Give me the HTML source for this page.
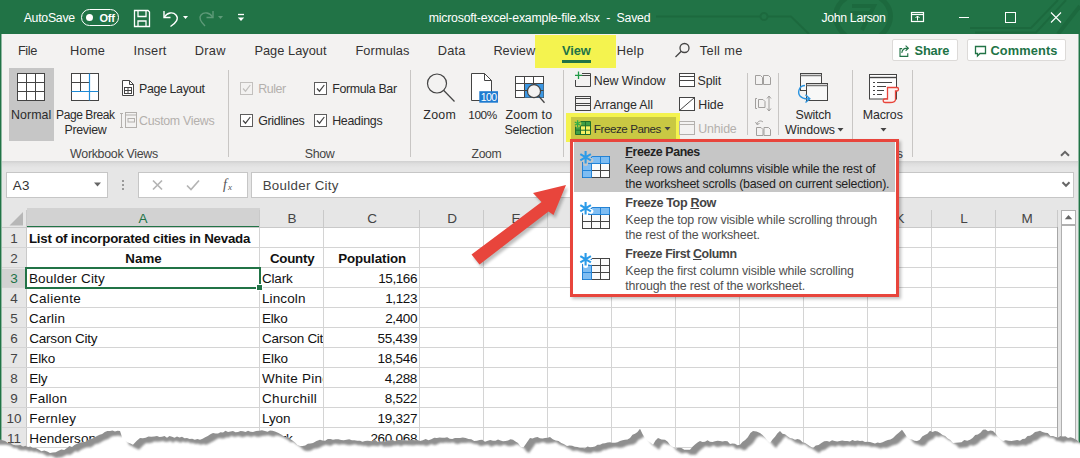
<!DOCTYPE html>
<html>
<head>
<meta charset="utf-8">
<title>Excel Freeze Panes</title>
<style>
html,body{margin:0;padding:0;}
body{width:1080px;height:458px;overflow:hidden;background:#fff;font-family:"Liberation Sans",sans-serif;font-size:13px;color:#262626;position:relative;}
.abs{position:absolute;}
.t{position:absolute;white-space:nowrap;line-height:16px;height:16px;}
.c{text-align:center;}
#titlebar{left:0;top:0;width:1080px;height:34px;background:#217346;}
#titlebar .t{color:#fff;font-size:13.5px;}
#tabs{left:2px;top:34px;width:1076px;height:32px;background:#f3f2f1;}
#tabs .t{font-size:14px;color:#333;top:8px;}
#ribbon{left:2px;top:66px;width:1076px;height:95px;background:#f3f2f1;}
#ribbon .t{font-size:13.5px;color:#2b2b2b;}
#ribbon .g{color:#444;}
#ribbon .dis{color:#b3b0ad;}
.sep{position:absolute;width:1px;background:#c8c6c4;}
#shade{left:2px;top:161px;width:1076px;height:7px;background:linear-gradient(#d0d0d0,#dedede 40%,#e6e6e6);}
#fbar{left:2px;top:168px;width:1076px;height:40px;background:#e6e6e6;}
.box{position:absolute;background:#fff;border:1px solid #c6c6c6;box-sizing:border-box;}
#grid{left:2px;top:208px;width:1076px;height:250px;background:#fff;}
.lb{position:absolute;left:0;top:34px;width:1px;height:424px;background:#217346;border-right:1px solid #8fb8a1;}
.rb{position:absolute;left:1079px;top:34px;width:1px;height:424px;background:#217346;border-left:1px solid #8fb8a1;margin-left:-1px;}
.cb{position:absolute;width:13px;height:13px;border:1px solid #5d5d5d;box-sizing:border-box;background:#fff;}
.cb.d{border-color:#c2c0be;background:#f3f2f1;}
.btn{position:absolute;background:#fff;border:1px solid #dcdad8;border-radius:2px;box-sizing:border-box;}
.tab{top:42.7px;font-size:14px;color:#333;}
.r{font-size:13px;color:#2b2b2b;}
.r.g{color:#444;}
.r.dis{color:#b3b0ad;}
.hd{font-size:13.500px;color:#444;margin-top:0.6px;}
.cell{font-size:13.500px;color:#111;margin-top:0.8px;}
.b{font-weight:bold;}
.mt{font-size:13px;font-weight:bold;color:#444;letter-spacing:-0.200px;}
.md{font-size:13px;color:#505050;}
</style>
</head>
<body>
<div class="abs" id="titlebar"></div>
<div class="abs" id="tabs"></div>
<div class="abs" id="ribbon"></div>
<div class="abs" id="shade"></div>
<div class="abs" id="fbar"></div>
<div class="abs" id="grid"></div>

<!-- TITLE BAR -->
<svg class="abs" style="left:0;top:0" width="1080" height="34" viewBox="0 0 1080 34">
  <g fill="none" stroke="#1c683d" stroke-width="2" opacity="0.85">
    <path d="M656 16.500 H760 M768 16.500 H791 L809 34"/><circle cx="764" cy="16.500" r="3.500"/>
    <path d="M846 -2 C832 8 832 24 846 36 M880 -2 C894 8 894 24 880 36" stroke-width="5"/>
    <path d="M852 6 H874 L862 30 M850 13 H870" stroke-width="4"/>
    <path d="M970 28 H1031 L1058 0" stroke-width="2"/>
    <path d="M975 32.500 H1036 L1066 0" stroke-width="2"/>
    <path d="M1080 6 L1058 34" stroke-width="4"/>
  </g>
</svg>
<div class="t" id="tAuto" style="left:23.7px;top:10px;color:#fff;font-size:12.3px;letter-spacing:-0.27px;">AutoSave</div>
<div class="abs" style="left:81px;top:9px;width:38px;height:17px;border:1px solid #fff;border-radius:9px;box-sizing:border-box;"></div>
<div class="abs" style="left:86px;top:14px;width:7px;height:7px;border-radius:4px;background:#fff;"></div>
<div class="t" id="tOff" style="left:99.4px;top:9.5px;color:#fff;font-size:11.0px;font-weight:bold;letter-spacing:-0.23px;">Off</div>
<svg class="abs" style="left:130px;top:6px" width="130" height="24" viewBox="0 0 130 24" fill="none" stroke="#fff" stroke-width="1.3">
  <!-- save -->
  <path d="M4.5 4.5 H18 L19.5 6 V20.5 H4.5 Z"/>
  <path d="M8 4.5 V10.5 H16 V4.5"/>
  <path d="M8 20.5 V15 H16 V20.5"/>
  <!-- undo -->
  <path d="M34 5 V11.5 H40.5" stroke-width="1.4"/>
  <path d="M34.5 11 C37 6.5 43 5.5 46 9 C49 12.5 46.5 16.5 40.5 20.5" stroke-width="1.4"/>
  <path d="M53 10 h5 l-2.5 3 z" fill="#fff" stroke="none"/>
  <!-- redo (dim) -->
  <g stroke="#5e9a78"><path d="M83 5 V11.5 H76.5" stroke-width="1.4"/>
  <path d="M82.500 11 C80 6.500 74 5.500 71 9 C68.500 12 70 15 75 20" stroke-width="1.4"/></g>
  <path d="M88 10 h5 l-2.500 3 z" fill="#5e9a78" stroke="none"/>
  <!-- customize -->
  <path d="M108 8.500 h6" stroke-width="1.300"/>
  <path d="M107.800 11.500 h6.400 l-3.200 3.500 z" fill="#fff" stroke="none"/>
</svg>
<div class="t" id="tTitle" style="left:428.7px;top:10px;color:#fff;font-size:12.3px;letter-spacing:-0.20px;">microsoft-excel-example-file.xlsx &nbsp;-&nbsp; Saved</div>
<div class="t" id="tUser" style="left:821.4px;top:10px;color:#fff;font-size:12.3px;letter-spacing:-0.32px;">John Larson</div>
<svg class="abs" style="left:905px;top:6px" width="165" height="24" viewBox="0 0 165 24" fill="none" stroke="#fff" stroke-width="1.2">
  <rect x="6.500" y="6.500" width="12" height="9"/>
  <path d="M6.500 8.500 h12" />
  <path d="M12.500 14.500 V10 M10.500 12 L12.500 10 L14.500 12" stroke-width="1"/>
  <path d="M54 11.500 h10" stroke-width="1"/>
  <rect x="100.500" y="6.500" width="10" height="10" stroke-width="1"/>
  <path d="M146 6.500 L156 16.500 M156 6.500 L146 16.500" stroke-width="1.100"/>
</svg>

<!-- TABS -->
<div class="abs" style="left:534.500px;top:35px;width:81.500px;height:32.500px;background:#f4f34f;"></div>
<div class="abs" style="left:562px;top:60px;width:29px;height:3px;background:#217346;"></div>
<div class="t tab" id="tFile" style="left:17.9px;font-size:12.8px;letter-spacing:-0.38px;">File</div>
<div class="t tab" id="tHome" style="left:70.0px;font-size:12.8px;letter-spacing:0.26px;">Home</div>
<div class="t tab" id="tInsert" style="left:133.4px;font-size:12.8px;letter-spacing:0.20px;">Insert</div>
<div class="t tab" id="tDraw" style="left:194.7px;font-size:12.8px;letter-spacing:0.33px;">Draw</div>
<div class="t tab" id="tPL" style="left:254.4px;font-size:12.8px;letter-spacing:0.03px;">Page Layout</div>
<div class="t tab" id="tForm" style="left:355.4px;font-size:12.8px;letter-spacing:0.11px;">Formulas</div>
<div class="t tab" id="tData" style="left:437.7px;font-size:12.8px;letter-spacing:0.22px;">Data</div>
<div class="t tab" id="tRev" style="left:493.4px;font-size:12.8px;letter-spacing:-0.04px;">Review</div>
<div class="t tab" id="tView" style="left:562.1px;color:#217346;font-weight:bold;letter-spacing:-0.11px;font-size:12.8px;">View</div>
<div class="t tab" id="tHelp" style="left:616.7px;font-size:12.8px;letter-spacing:0.27px;">Help</div>
<svg class="abs" style="left:672px;top:40px" width="22" height="22" viewBox="0 0 22 22" fill="none" stroke="#444" stroke-width="1.3"><circle cx="12.500" cy="8" r="4.500"/><path d="M9.300 11.200 L3.500 17"/></svg>
<div class="t tab" id="tTell" style="left:699.8px;font-size:12.8px;letter-spacing:0.32px;">Tell me</div>
<div class="btn" style="left:892px;top:39px;width:66px;height:22px;"></div>
<div class="btn" style="left:967px;top:39px;width:99px;height:22px;"></div>
<svg class="abs" style="left:897px;top:42.500px" width="15.500" height="15.500" viewBox="0 0 18 18" fill="none" stroke="#217346" stroke-width="1.3"><path d="M6 6.500 H3.500 V15.500 H12.500 V12"/><path d="M5.500 11.500 C6 8 8.500 6 12 6 M10 3 L13.200 6 L10 9"/></svg>
<div class="t" id="tShare" style="left:914.6px;top:43px;color:#217346;font-size:12.8px;font-weight:bold;letter-spacing:-0.22px;">Share</div>
<svg class="abs" style="left:972px;top:41.500px" width="18" height="18" viewBox="0 0 18 18" fill="none" stroke="#217346" stroke-width="1.300"><path d="M3.500 4.500 H13.500 V11.500 H8 L5.500 14 V11.500 H3.500 Z"/></svg>
<div class="t" id="tComm" style="left:990.4px;top:43px;color:#217346;font-size:12.8px;font-weight:bold;letter-spacing:0.13px;">Comments</div>

<!-- RIBBON CONTENT -->
<div class="abs" style="left:9px;top:68px;width:45px;height:73px;background:#c6c6c6;"></div>
<!-- Normal icon -->
<svg class="abs" style="left:16px;top:72px" width="30" height="30" viewBox="0 0 30 30" fill="#fff" stroke="#444" stroke-width="1"><rect x="1.500" y="1.500" width="27" height="27"/><path d="M10.500 1.500 V28.500 M19.500 1.500 V28.500 M1.500 10.500 H28.500 M1.500 19.500 H28.500" fill="none"/></svg>
<div class="t r" id="rNormal" style="left:11.0px;top:107px;font-size:12.4px;letter-spacing:0.06px;">Normal</div>
<!-- Page break icon -->
<svg class="abs" style="left:70px;top:72px" width="30" height="30" viewBox="0 0 30 30" fill="#fff" stroke="#444" stroke-width="1"><rect x="1.500" y="1.500" width="27" height="27"/><path d="M10.500 1.500 V19.500 M1.500 10.500 H19.500" fill="none"/><path d="M19.500 1.500 V28.500 M1.500 19.500 H28.500" fill="none" stroke="#1e8ad6" stroke-width="1.200"/></svg>
<div class="t r" id="rPB" style="left:56.1px;top:107px;font-size:12.0px;letter-spacing:-0.42px;">Page Break</div>
<div class="t r" id="rPrev" style="left:64.5px;top:122px;font-size:12.4px;letter-spacing:-0.31px;">Preview</div>
<!-- Page Layout small icon -->
<svg class="abs" style="left:120px;top:80px" width="18" height="18" viewBox="0 0 18 18" fill="none" stroke="#444" stroke-width="1"><path d="M2.500 0.500 H9.500 L13.500 4.500 V15.500 H2.500 Z" fill="#fff"/><path d="M9.500 0.500 V4.500 H13.500"/><rect x="4.500" y="7.500" width="7" height="6"/><path d="M8 7.500 V13.500 M4.500 10.500 H11.500"/></svg>
<div class="t r" id="rPL" style="left:139.0px;top:81px;font-size:12.4px;letter-spacing:-0.36px;">Page Layout</div>
<svg class="abs" style="left:118px;top:110px" width="20" height="20" viewBox="0 0 20 20" fill="none" stroke="#b3b0ad" stroke-width="1"><path d="M3.500 3.500 V17.500 M2 3.500 H5 M2 17.500 H5"/><rect x="7.500" y="2.500" width="11" height="15"/><path d="M7.500 5 H18.500"/><rect x="10" y="8.500" width="6.500" height="3.500"/></svg>
<div class="t r dis" id="rCV" style="left:139.0px;top:113px;font-size:12.4px;letter-spacing:-0.30px;">Custom Views</div>
<div class="t r g" id="gWV" style="left:70.1px;top:146px;font-size:12.4px;letter-spacing:-0.29px;">Workbook Views</div>
<div class="sep" style="left:228px;top:70px;height:87px;"></div>
<!-- Show -->
<div class="cb d" style="left:240px;top:81.500px;"></div>
<div class="cb" style="left:240px;top:113.500px;"></div>
<div class="cb" style="left:314px;top:81.500px;"></div>
<div class="cb" style="left:314px;top:113.500px;"></div>
<svg class="abs" style="left:240px;top:82px" width="90" height="46" viewBox="0 0 90 46" fill="none" stroke="#444" stroke-width="1.200"><path d="M3 6.500 L5.500 9.200 L10.300 3" stroke="#c2c0be"/><path d="M3 38.500 L5.500 41.200 L10.300 35"/><path d="M77 6.500 L79.500 9.200 L84.300 3"/><path d="M77 38.500 L79.500 41.200 L84.300 35"/></svg>
<div class="t r dis" id="rRuler" style="left:258.2px;top:81px;font-size:12.4px;letter-spacing:-0.44px;">Ruler</div>
<div class="t r" id="rGrid" style="left:258.2px;top:113px;font-size:12.4px;letter-spacing:-0.29px;">Gridlines</div>
<div class="t r" id="rFB" style="left:332.2px;top:81px;font-size:12.4px;letter-spacing:-0.33px;">Formula Bar</div>
<div class="t r" id="rHead" style="left:332.2px;top:113px;font-size:12.4px;letter-spacing:-0.28px;">Headings</div>
<div class="t r g" id="gShow" style="left:304.8px;top:146px;font-size:12.4px;letter-spacing:-0.33px;">Show</div>
<div class="sep" style="left:410px;top:70px;height:87px;"></div>
<!-- Zoom -->
<svg class="abs" style="left:424px;top:70px" width="34" height="34" viewBox="0 0 34 34" fill="none" stroke="#444" stroke-width="1.200"><circle cx="13" cy="13.500" r="9.500"/><path d="M19.800 20.500 L30.500 31.500"/></svg>
<div class="t r" id="rZoom" style="left:423.3px;top:107px;font-size:12.4px;letter-spacing:0.28px;">Zoom</div>
<svg class="abs" style="left:468px;top:70px" width="34" height="34" viewBox="0 0 34 34" fill="none" stroke="#444" stroke-width="1"><path d="M3.500 3.500 H16.500 L23.500 10.500 V30.500 H3.500 Z" fill="#fff"/><path d="M16.500 3.500 V10.500 H23.500"/><rect x="11.300" y="21.200" width="18.700" height="11.500" fill="#1e7bd0" stroke="none"/><text x="20.600" y="31" font-family="Liberation Sans, sans-serif" font-size="10.500" fill="#fff" stroke="none" text-anchor="middle" letter-spacing="-0.600">100</text></svg>
<div class="t r" id="r100" style="left:468.3px;top:107px;font-size:11.8px;letter-spacing:-0.42px;">100%</div>
<svg class="abs" style="left:512px;top:70px" width="36" height="36" viewBox="0 0 36 36" fill="none" stroke="#444" stroke-width="1"><rect x="3.500" y="6.500" width="28" height="21" fill="#fff"/><rect x="12.500" y="13.500" width="19" height="14" fill="#3b97e3" stroke="none"/><path d="M3.500 13.500 H31.500 M3.500 20.500 H31.500 M12.500 6.500 V27.500 M21.500 6.500 V27.500"/><circle cx="22" cy="21.200" r="6.500" fill="#f3f2f1" stroke-width="1.200"/><path d="M26.600 26 L32.500 32.700" stroke-width="1.300"/></svg>
<div class="t r" id="rZT" style="left:505.4px;top:107px;font-size:12.4px;letter-spacing:0.22px;">Zoom to</div>
<div class="t r" id="rSel" style="left:504.5px;top:122px;font-size:12.4px;letter-spacing:-0.24px;">Selection</div>
<div class="t r g" id="gZoom" style="left:471.6px;top:146px;font-size:12.2px;letter-spacing:-0.36px;">Zoom</div>
<div class="sep" style="left:563px;top:70px;height:87px;"></div>
<!-- Window -->
<div class="abs" style="left:566px;top:113px;width:114px;height:29px;background:#f4f34f;"></div>
<div class="abs" style="left:571px;top:117px;width:105px;height:23px;background:#c9c843;"></div>
<svg class="abs" style="left:573px;top:70px" width="20" height="70" viewBox="0 0 20 70" fill="none" stroke="#444" stroke-width="1">
 <path d="M9 3.500 H17.500 V16.500 H2.500 V10"/><path d="M9 5.500 H17.500"/><path d="M5.500 1.500 V9 M2 5.300 H9.200" stroke="#1e9a45" stroke-width="1.300"/>
 <rect x="2.500" y="26.500" width="15" height="14" fill="#f3f2f1"/><path d="M2.500 28.500 H17.500 M2.500 33.500 H17.500 M2.500 35.500 H17.500"/>
 <rect x="2.500" y="51.500" width="15" height="13" fill="#f6f163" stroke="none"/>
 <rect x="7.500" y="51.500" width="10" height="4.300" fill="#3f9f45" stroke="none"/><rect x="2.500" y="55.800" width="5" height="8.700" fill="#3f9f45" stroke="none"/>
 <path d="M2.500 51.500 H17.500 V64.500 H2.500 Z M2.500 55.800 H17.500 M2.500 60.200 H17.500 M7.500 51.500 V64.500 M12.500 51.500 V64.500" stroke="#1f6e2b"/>
 <path d="M4.600 50 V57.200 M1.500 51.800 L7.700 55.400 M7.700 51.800 L1.500 55.400" stroke="#c9c843" stroke-width="3.400"/>
 <path d="M4.600 50.300 V56.900 M1.800 52 L7.400 55.200 M7.400 52 L1.800 55.200" stroke="#2fae45" stroke-width="1.300"/>
</svg>
<div class="t r" id="rNW" style="left:593.8px;top:73px;font-size:12.4px;letter-spacing:-0.06px;">New Window</div>
<div class="t r" id="rAA" style="left:593.4px;top:97px;font-size:12.4px;letter-spacing:-0.11px;">Arrange All</div>
<div class="t r" id="rFP" style="left:593.8px;top:121px;font-size:11.6px;letter-spacing:-0.42px;">Freeze Panes</div>
<svg class="abs" style="left:663.500px;top:126px" width="8" height="6" viewBox="0 0 8 6"><path d="M0.500 1 h6 l-3 3.500 z" fill="#444"/></svg>
<svg class="abs" style="left:677px;top:70px" width="20" height="70" viewBox="0 0 20 70" fill="none" stroke="#444" stroke-width="1">
 <rect x="2.500" y="3.500" width="15" height="13" fill="#fff"/><path d="M2.500 6.500 H17.500 M2.500 10.500 H17.500"/>
 <rect x="2.500" y="27.500" width="15" height="13" fill="#fff"/><path d="M2.500 40.500 L17.500 27.500"/>
 <g stroke="#b3b0ad"><rect x="2.500" y="51.500" width="15" height="13" fill="#f3f2f1"/><path d="M2.500 54.500 H17.500"/></g>
</svg>
<div class="t r" id="rSplit" style="left:697.6px;top:73px;font-size:12.4px;letter-spacing:-0.14px;">Split</div>
<div class="t r" id="rHide" style="left:698.3px;top:97px;font-size:12.4px;letter-spacing:-0.07px;">Hide</div>
<div class="t r dis" id="rUnhide" style="left:698.3px;top:121px;font-size:12.4px;letter-spacing:-0.16px;">Unhide</div>
<div class="sep" style="left:747px;top:73px;height:62px;"></div>
<svg class="abs" style="left:753px;top:70px" width="20" height="70" viewBox="0 0 20 70" fill="none" stroke="#a19f9d" stroke-width="1">
 <path d="M2.500 5.500 H7.500 L9.500 7.500 V14.500 H2.500 Z M10.500 5.500 H15.500 L17.500 7.500 V14.500 H10.500 Z"/>
 <path d="M4 28.500 H2.500 V38.500 H4 M5.500 29.500 H10 L12 31.500 V37.500 H5.500 Z M16 26 V41 M14 28.500 L16 26 L18 28.500 M14 38.500 L16 41 L18 38.500"/>
 <path d="M3.500 57.500 H8 L10 59.500 V65.500 H3.500 Z M11 57.500 H15.500 L17.500 59.500 V65.500 H11 Z M4 54.500 C4 51 8 50 10 52 M4 54.500 L2.500 52 M4 54.500 L6.500 53.500"/>
</svg>
<div class="sep" style="left:778px;top:73px;height:62px;"></div>
<svg class="abs" style="left:794px;top:70px" width="40" height="36" viewBox="0 0 40 36" fill="none" stroke="#444" stroke-width="1">
 <rect x="6.500" y="3.500" width="21" height="17" fill="#f8f8f8"/><path d="M6.500 5.500 H27.500" stroke-width="1.500" stroke="#777"/>
 <rect x="12.500" y="13.500" width="21" height="17" fill="#f8f8f8"/><path d="M12.500 15.500 H33.500" stroke-width="1.500" stroke="#777"/>
 <path d="M11 15.500 C5.500 15.500 3 22 6 26 C8 28.500 11 29 15 28.800 M11.500 24.800 L15.800 28.800 L11.500 32.600" stroke="#2b94e0" stroke-width="1.400"/>
</svg>
<div class="t r" id="rSw" style="left:795.6px;top:107px;font-size:12.4px;letter-spacing:-0.18px;">Switch</div>
<div class="t r" id="rWin" style="left:785.0px;top:122px;font-size:12.4px;letter-spacing:-0.04px;">Windows</div>
<svg class="abs" style="left:836.500px;top:127px" width="8" height="6" viewBox="0 0 8 6"><path d="M0.500 1 h6 l-3 3.500 z" fill="#444"/></svg>
<div class="sep" style="left:852px;top:70px;height:87px;"></div>
<svg class="abs" style="left:865px;top:70px" width="38" height="36" viewBox="0 0 38 36" fill="none" stroke="#444" stroke-width="1">
 <rect x="4.500" y="4.500" width="27" height="24.500" fill="#fff"/><path d="M4.500 7.500 H31.500" stroke-width="1.400"/><path d="M8 12.500 H10 M12 12.500 H27 M8 16.500 H10 M12 16.500 H21 M8 20.500 H10 M12 20.500 H19 M8 24.500 H10 M12 24.500 H17"/>
 <path d="M22.500 17.500 H32 C34 17.500 34 21 32 21 H30.500 V29.500 C30.500 32.500 27 32.500 25 32.500 H20 C17.500 32.500 17.500 29 20 29 H22.500 Z" fill="#fdf3f2" stroke="#e8443a" stroke-width="1.300"/>
</svg>
<div class="t r" id="rMac" style="left:862.7px;top:107px;font-size:12.4px;letter-spacing:-0.09px;">Macros</div>
<svg class="abs" style="left:879.500px;top:127px" width="8" height="6" viewBox="0 0 8 6"><path d="M0.500 1 h6 l-3 3.500 z" fill="#444"/></svg>
<div class="sep" style="left:912px;top:70px;height:87px;"></div>
<div class="t r g" id="gWin" style="left:896.500px;top:146px;">s</div>
<svg class="abs" style="left:1058.500px;top:147.500px" width="12" height="10" viewBox="0 0 12 10" fill="none" stroke="#666" stroke-width="2"><path d="M2 7.800 L6 3.800 L10 7.800"/></svg>

<!-- FORMULA BAR -->
<div class="box" style="left:6px;top:172px;width:102px;height:26px;"></div>
<div class="t" id="fA3" style="left:12.7px;top:178px;font-size:13.4px;color:#333;letter-spacing:0.40px;">A3</div>
<svg class="abs" style="left:93px;top:181px" width="10" height="8" viewBox="0 0 10 8"><path d="M1 1.500 h7 l-3.500 4 z" fill="#666"/></svg>
<div class="abs" style="left:122px;top:180px;width:2px;height:2px;background:#9a9a9a;box-shadow:0 4px 0 #9a9a9a,0 8px 0 #9a9a9a;"></div>
<div class="box" style="left:138px;top:172px;width:110px;height:26px;"></div>
<svg class="abs" style="left:139px;top:172px" width="108" height="25" viewBox="0 0 108 25" fill="none" stroke="#b4b4b4" stroke-width="1.700"><path d="M14 8.500 L23 17.500 M23 8.500 L14 17.500"/><path d="M48 13.500 L52 17.500 L60 8.500"/><text x="84" y="17" font-family="Liberation Serif, serif" font-style="italic" font-size="14" fill="#555" stroke="none">f</text><text x="89" y="17.500" font-family="Liberation Serif, serif" font-style="italic" font-size="9" fill="#555" stroke="none">x</text></svg>
<div class="box" style="left:251px;top:172px;width:823px;height:26px;"></div>
<div class="t" id="fBC" style="left:262.7px;top:178px;font-size:13.3px;color:#444;letter-spacing:0.31px;">Boulder City</div>
<svg class="abs" style="left:1059.500px;top:180px" width="12" height="10" viewBox="0 0 12 10" fill="none" stroke="#666" stroke-width="2"><path d="M2.500 2.200 L6 5.800 L9.500 2.200"/></svg>
<!-- GRID -->
<div class="abs" style="left:2px;top:208px;width:1076px;height:20px;background:#e6e6e6;"></div>
<div class="abs" style="left:2px;top:228px;width:24px;height:230px;background:#e6e6e6;"></div>
<div class="abs" style="left:27px;top:208px;width:233px;height:19px;background:#d2d2d2;border-bottom:2px solid #217346;box-sizing:border-box;height:20px;"></div>
<div class="abs" style="left:2px;top:269px;width:24px;height:19px;background:#d2d2d2;border-right:2px solid #217346;box-sizing:border-box;width:25px;"></div>
<svg class="abs" style="left:8px;top:211px" width="16" height="16" viewBox="0 0 16 16"><path d="M15 1 V14.500 H1.500 Z" fill="#b7b7b7"/></svg>
<div class="abs" style="left:259px;top:210px;width:1px;height:18px;background:#c9c9c9;"></div>
<div class="t c hd" style="left:26px;width:234px;top:210px;color:#217346;">A</div>
<div class="abs" style="left:323px;top:210px;width:1px;height:18px;background:#c9c9c9;"></div>
<div class="t c hd" style="left:260px;width:64px;top:210px;color:#444;">B</div>
<div class="abs" style="left:419px;top:210px;width:1px;height:18px;background:#c9c9c9;"></div>
<div class="t c hd" style="left:324px;width:96px;top:210px;color:#444;">C</div>
<div class="abs" style="left:483px;top:210px;width:1px;height:18px;background:#c9c9c9;"></div>
<div class="t c hd" style="left:420px;width:64px;top:210px;color:#444;">D</div>
<div class="abs" style="left:547px;top:210px;width:1px;height:18px;background:#c9c9c9;"></div>
<div class="t c hd" style="left:484px;width:64px;top:210px;color:#444;">E</div>
<div class="abs" style="left:611px;top:210px;width:1px;height:18px;background:#c9c9c9;"></div>
<div class="t c hd" style="left:548px;width:64px;top:210px;color:#444;">F</div>
<div class="abs" style="left:675px;top:210px;width:1px;height:18px;background:#c9c9c9;"></div>
<div class="t c hd" style="left:612px;width:64px;top:210px;color:#444;">G</div>
<div class="abs" style="left:739px;top:210px;width:1px;height:18px;background:#c9c9c9;"></div>
<div class="t c hd" style="left:676px;width:64px;top:210px;color:#444;">H</div>
<div class="abs" style="left:803px;top:210px;width:1px;height:18px;background:#c9c9c9;"></div>
<div class="t c hd" style="left:740px;width:64px;top:210px;color:#444;">I</div>
<div class="abs" style="left:867px;top:210px;width:1px;height:18px;background:#c9c9c9;"></div>
<div class="t c hd" style="left:804px;width:64px;top:210px;color:#444;">J</div>
<div class="abs" style="left:931px;top:210px;width:1px;height:18px;background:#c9c9c9;"></div>
<div class="t c hd" style="left:868px;width:64px;top:210px;color:#444;">K</div>
<div class="abs" style="left:995px;top:210px;width:1px;height:18px;background:#c9c9c9;"></div>
<div class="t c hd" style="left:932px;width:64px;top:210px;color:#444;">L</div>
<div class="abs" style="left:1057px;top:210px;width:1px;height:18px;background:#c9c9c9;"></div>
<div class="t c hd" style="left:996px;width:62px;top:210px;color:#444;">M</div>
<div class="abs" style="left:26px;top:210px;width:1px;height:18px;background:#c9c9c9;"></div>
<div class="abs" style="left:259px;top:228px;width:1px;height:230px;background:#d4d4d4;"></div>
<div class="abs" style="left:323px;top:228px;width:1px;height:230px;background:#d4d4d4;"></div>
<div class="abs" style="left:419px;top:228px;width:1px;height:230px;background:#d4d4d4;"></div>
<div class="abs" style="left:483px;top:228px;width:1px;height:230px;background:#d4d4d4;"></div>
<div class="abs" style="left:547px;top:228px;width:1px;height:230px;background:#d4d4d4;"></div>
<div class="abs" style="left:611px;top:228px;width:1px;height:230px;background:#d4d4d4;"></div>
<div class="abs" style="left:675px;top:228px;width:1px;height:230px;background:#d4d4d4;"></div>
<div class="abs" style="left:739px;top:228px;width:1px;height:230px;background:#d4d4d4;"></div>
<div class="abs" style="left:803px;top:228px;width:1px;height:230px;background:#d4d4d4;"></div>
<div class="abs" style="left:867px;top:228px;width:1px;height:230px;background:#d4d4d4;"></div>
<div class="abs" style="left:931px;top:228px;width:1px;height:230px;background:#d4d4d4;"></div>
<div class="abs" style="left:995px;top:228px;width:1px;height:230px;background:#d4d4d4;"></div>
<div class="abs" style="left:1057px;top:228px;width:1px;height:230px;background:#d4d4d4;"></div>
<div class="abs" style="left:26px;top:228px;width:1px;height:230px;background:#c9c9c9;"></div>
<div class="abs" style="left:2px;top:247px;width:1056px;height:1px;background:#d4d4d4;"></div>
<div class="abs" style="left:2px;top:267px;width:1056px;height:1px;background:#d4d4d4;"></div>
<div class="abs" style="left:2px;top:287px;width:1056px;height:1px;background:#d4d4d4;"></div>
<div class="abs" style="left:2px;top:307px;width:1056px;height:1px;background:#d4d4d4;"></div>
<div class="abs" style="left:2px;top:327px;width:1056px;height:1px;background:#d4d4d4;"></div>
<div class="abs" style="left:2px;top:347px;width:1056px;height:1px;background:#d4d4d4;"></div>
<div class="abs" style="left:2px;top:367px;width:1056px;height:1px;background:#d4d4d4;"></div>
<div class="abs" style="left:2px;top:387px;width:1056px;height:1px;background:#d4d4d4;"></div>
<div class="abs" style="left:2px;top:407px;width:1056px;height:1px;background:#d4d4d4;"></div>
<div class="abs" style="left:2px;top:427px;width:1056px;height:1px;background:#d4d4d4;"></div>
<div class="abs" style="left:2px;top:447px;width:1056px;height:1px;background:#d4d4d4;"></div>
<div class="abs" style="left:2px;top:467px;width:1056px;height:1px;background:#d4d4d4;"></div>
<div class="abs" style="left:2px;top:227px;width:1056px;height:1px;background:#c9c9c9;"></div>
<div class="t c hd" style="left:2px;width:24px;top:230px;color:#444;">1</div>
<div class="t c hd" style="left:2px;width:24px;top:250px;color:#444;">2</div>
<div class="t c hd" style="left:2px;width:24px;top:270px;color:#217346;">3</div>
<div class="t c hd" style="left:2px;width:24px;top:290px;color:#444;">4</div>
<div class="t c hd" style="left:2px;width:24px;top:310px;color:#444;">5</div>
<div class="t c hd" style="left:2px;width:24px;top:330px;color:#444;">6</div>
<div class="t c hd" style="left:2px;width:24px;top:350px;color:#444;">7</div>
<div class="t c hd" style="left:2px;width:24px;top:370px;color:#444;">8</div>
<div class="t c hd" style="left:2px;width:24px;top:390px;color:#444;">9</div>
<div class="t c hd" style="left:2px;width:24px;top:410px;color:#444;">10</div>
<div class="t c hd" style="left:2px;width:24px;top:430px;color:#444;">11</div>
<div class="abs" style="left:27px;top:228px;width:232px;height:19px;background:#fff;"></div>
<div class="t cell b" id="c1" style="left:28.9px;top:230px;font-size:13.3px;letter-spacing:-0.21px;">List of incorporated cities in Nevada</div>
<div class="t cell b" id="c2a" style="left:125.2px;top:250px;font-size:13.3px;letter-spacing:0.12px;">Name</div>
<div class="t cell b" id="c2b" style="left:269.9px;top:250px;font-size:13.3px;letter-spacing:-0.22px;">County</div>
<div class="t cell b" id="c2c" style="left:338.2px;top:250px;font-size:13.3px;letter-spacing:-0.08px;">Population</div>
<div class="t cell" id="ca0" style="left:28.9px;top:270px;font-size:13.5px;letter-spacing:0.22px;">Boulder City</div>
<div class="t cell" id="cb0" style="left:261.9px;top:270px;overflow:hidden;font-size:13.5px;letter-spacing:-0.16px;width:61px;">Clark</div>
<div class="t cell" id="cc0" style="left:378.2px;top:270px;font-size:13.5px;letter-spacing:-0.40px;">15,166</div>
<div class="t cell" id="ca1" style="left:28.9px;top:290px;font-size:13.5px;letter-spacing:0.33px;">Caliente</div>
<div class="t cell" id="cb1" style="left:261.9px;top:290px;overflow:hidden;font-size:13.5px;letter-spacing:0.13px;width:61px;">Lincoln</div>
<div class="t cell" id="cc1" style="left:385.2px;top:290px;font-size:13.5px;letter-spacing:-0.38px;">1,123</div>
<div class="t cell" id="ca2" style="left:28.9px;top:310px;font-size:13.5px;letter-spacing:0.16px;">Carlin</div>
<div class="t cell" id="cb2" style="left:261.9px;top:310px;overflow:hidden;font-size:13.5px;letter-spacing:-0.14px;width:61px;">Elko</div>
<div class="t cell" id="cc2" style="left:385.2px;top:310px;font-size:13.5px;letter-spacing:-0.38px;">2,400</div>
<div class="t cell" id="ca3" style="left:29.3px;top:330px;font-size:13.5px;letter-spacing:-0.23px;">Carson City</div>
<div class="t cell" id="cb3" style="left:262.1px;top:330px;overflow:hidden;font-size:13.5px;letter-spacing:-0.28px;width:61px;">Carson City</div>
<div class="t cell" id="cc3" style="left:377.6px;top:330px;font-size:13.5px;letter-spacing:-0.30px;">55,439</div>
<div class="t cell" id="ca4" style="left:29.3px;top:350px;font-size:13.5px;letter-spacing:-0.12px;">Elko</div>
<div class="t cell" id="cb4" style="left:262.1px;top:350px;overflow:hidden;font-size:13.5px;letter-spacing:-0.09px;width:61px;">Elko</div>
<div class="t cell" id="cc4" style="left:377.6px;top:350px;font-size:13.5px;letter-spacing:-0.30px;">18,546</div>
<div class="t cell" id="ca5" style="left:29.3px;top:370px;font-size:13.5px;letter-spacing:-0.29px;">Ely</div>
<div class="t cell" id="cb5" style="left:262.1px;top:370px;overflow:hidden;font-size:13.5px;letter-spacing:0.27px;width:61px;">White Pine</div>
<div class="t cell" id="cc5" style="left:384.8px;top:370px;font-size:13.5px;letter-spacing:-0.30px;">4,288</div>
<div class="t cell" id="ca6" style="left:29.3px;top:390px;font-size:13.5px;letter-spacing:0.17px;">Fallon</div>
<div class="t cell" id="cb6" style="left:262.1px;top:390px;overflow:hidden;font-size:13.5px;letter-spacing:0.27px;width:61px;">Churchill</div>
<div class="t cell" id="cc6" style="left:384.8px;top:390px;font-size:13.5px;letter-spacing:-0.30px;">8,522</div>
<div class="t cell" id="ca7" style="left:29.3px;top:410px;font-size:13.5px;letter-spacing:0.27px;">Fernley</div>
<div class="t cell" id="cb7" style="left:262.1px;top:410px;overflow:hidden;font-size:13.5px;letter-spacing:-0.12px;width:61px;">Lyon</div>
<div class="t cell" id="cc7" style="left:377.6px;top:410px;font-size:13.5px;letter-spacing:-0.30px;">19,327</div>
<div class="t cell" id="ca8" style="left:29.3px;top:430px;font-size:13.5px;letter-spacing:0.08px;">Henderson</div>
<div class="t cell" id="cb8" style="left:261.9px;top:430px;overflow:hidden;font-size:13.5px;letter-spacing:-0.16px;width:61px;">Clark</div>
<div class="t cell" id="cc8" style="left:370.4px;top:430px;font-size:13.5px;letter-spacing:-0.30px;">260,068</div>
<div class="abs" style="left:25px;top:267px;width:236px;height:22px;border:2px solid #217346;box-sizing:border-box;"></div>
<div class="abs" style="left:256px;top:284px;width:7px;height:7px;background:#217346;border:1px solid #fff;box-sizing:border-box;"></div>
<div class="abs" style="left:1058px;top:208px;width:20px;height:250px;background:#e6e6e6;"></div>
<div class="abs" style="left:1057px;top:227px;width:1px;height:231px;background:#a6a6a6;"></div>
<div class="box" style="left:1061px;top:210px;width:15px;height:15px;border-color:#b0b0b0;"></div>
<svg class="abs" style="left:1063px;top:214px" width="11" height="8" viewBox="0 0 11 8"><path d="M1.800 5.300 L5.500 1 L9.200 5.300 Z" fill="#666"/></svg>
<div class="box" style="left:1061px;top:225px;width:15px;height:233px;border-color:#b0b0b0;"></div>
<!-- DROPDOWN -->
<div class="abs" style="left:570px;top:139px;width:329px;height:158px;background:#fff;border:3px solid #e8453c;box-sizing:border-box;box-shadow:2px 2px 3px rgba(0,0,0,0.250);"></div>
<div class="abs" style="left:574px;top:142px;width:321px;height:50px;background:#c6c6c6;"></div>
<svg class="abs" style="left:579px;top:150px" width="34" height="30" viewBox="0 0 34 30"><rect x="3.5" y="6.5" width="27" height="21" fill="#fbfbfb"/><rect x="3.5" y="6.5" width="27" height="7" fill="#7fbdf2"/><rect x="3.5" y="6.5" width="9" height="21" fill="#7fbdf2"/><g fill="none" stroke="#444" stroke-width="1"><rect x="3.5" y="6.5" width="27" height="21"/><path d="M12.5 6.5 V27.5 M21.5 6.5 V27.5 M3.5 13.5 H30.5 M3.5 20.5 H30.5"/></g><path d="M3.5 6.5 H30.5 V13.5 H12.5 V27.5 H3.5 Z M12.5 6.5 V13.5 M21.5 6.5 V13.5 M3.5 13.5 H12.5 M3.5 20.5 H12.5" fill="none" stroke="#2383d6" stroke-width="1"/><path d="M6.600 1 V13.400 M1.300 4.100 L11.900 10.300 M11.900 4.100 L1.300 10.300" stroke="#c6c6c6" stroke-width="5" fill="none" stroke-linecap="round"/><path d="M6.600 1 V13.400 M1.300 4.100 L11.900 10.300 M11.900 4.100 L1.300 10.300" stroke="#2b9be8" stroke-width="2.100" fill="none"/></svg>
<svg class="abs" style="left:579px;top:201px" width="34" height="30" viewBox="0 0 34 30"><rect x="3.5" y="6.5" width="27" height="21" fill="#fbfbfb"/><rect x="3.5" y="6.5" width="27" height="7" fill="#7fbdf2"/><g fill="none" stroke="#444" stroke-width="1"><rect x="3.5" y="6.5" width="27" height="21"/><path d="M12.5 6.5 V27.5 M21.5 6.5 V27.5 M3.5 13.5 H30.5 M3.5 20.5 H30.5"/></g><path d="M3.5 6.5 H30.5 V13.5 H3.5 Z M12.5 6.5 V13.5 M21.5 6.5 V13.5" fill="none" stroke="#2383d6" stroke-width="1"/><path d="M6.600 1 V13.400 M1.300 4.100 L11.900 10.300 M11.900 4.100 L1.300 10.300" stroke="#fff" stroke-width="5" fill="none" stroke-linecap="round"/><path d="M6.600 1 V13.400 M1.300 4.100 L11.900 10.300 M11.900 4.100 L1.300 10.300" stroke="#2b9be8" stroke-width="2.100" fill="none"/></svg>
<svg class="abs" style="left:579px;top:252px" width="34" height="30" viewBox="0 0 34 30"><rect x="3.5" y="6.5" width="27" height="21" fill="#fbfbfb"/><rect x="3.5" y="6.5" width="9" height="21" fill="#7fbdf2"/><g fill="none" stroke="#444" stroke-width="1"><rect x="3.5" y="6.5" width="27" height="21"/><path d="M12.5 6.5 V27.5 M21.5 6.5 V27.5 M3.5 13.5 H30.5 M3.5 20.5 H30.5"/></g><path d="M3.5 6.5 H12.5 V27.5 H3.5 Z M3.5 13.5 H12.5 M3.5 20.5 H12.5" fill="none" stroke="#2383d6" stroke-width="1"/><path d="M6.600 1 V13.400 M1.300 4.100 L11.900 10.300 M11.900 4.100 L1.300 10.300" stroke="#fff" stroke-width="5" fill="none" stroke-linecap="round"/><path d="M6.600 1 V13.400 M1.300 4.100 L11.900 10.300 M11.900 4.100 L1.300 10.300" stroke="#2b9be8" stroke-width="2.100" fill="none"/></svg>
<div class="t mt" id="m1" style="left:625.3px;top:144px;color:#222;font-size:12.4px;letter-spacing:-0.39px;"><u>F</u>reeze Panes</div>
<div class="t md" id="m1a" style="left:625.3px;top:161px;color:#222;font-size:12.4px;letter-spacing:-0.22px;">Keep rows and columns visible while the rest of</div>
<div class="t md" id="m1b" style="left:625.3px;top:175.500px;color:#222;font-size:12.4px;letter-spacing:-0.24px;">the worksheet scrolls (based on current selection).</div>
<div class="t mt" id="m2" style="left:625.3px;top:195px;font-size:12.6px;letter-spacing:-0.36px;">Freeze Top <u>R</u>ow</div>
<div class="t md" id="m2a" style="left:625.3px;top:212px;font-size:12.4px;letter-spacing:-0.12px;">Keep the top row visible while scrolling through</div>
<div class="t md" id="m2b" style="left:625.3px;top:226.500px;font-size:12.4px;letter-spacing:-0.18px;">the rest of the worksheet.</div>
<div class="t mt" id="m3" style="left:625.3px;top:246px;font-size:12.4px;letter-spacing:-0.41px;">Freeze First <u>C</u>olumn</div>
<div class="t md" id="m3a" style="left:625.3px;top:263px;font-size:12.4px;letter-spacing:-0.14px;">Keep the first column visible while scrolling</div>
<div class="t md" id="m3b" style="left:625.3px;top:277.500px;font-size:12.4px;letter-spacing:-0.14px;">through the rest of the worksheet.</div>
<svg class="abs" style="left:460px;top:170px" width="120" height="110" viewBox="460 170 120 110">
<defs><filter id="ash" x="-20%" y="-20%" width="140%" height="140%"><feGaussianBlur stdDeviation="1.500"/></filter></defs>
<path id="arrshadow" transform="translate(2,3)" d="M566 185 L533 193 L541.500 202 L471.500 254.500 L479.500 264.500 L548.500 211.500 L553.500 215 Z" fill="#000" opacity="0.250" filter="url(#ash)"/>
<path d="M566 185 L533 193 L541.500 202 L471.500 254.500 L479.500 264.500 L548.500 211.500 L553.500 215 Z" fill="#e8453c"/>
</svg>
<!-- TORN EDGE -->
<svg class="abs" style="left:0;top:398px;z-index:50" width="1080" height="60" viewBox="0 398 1080 60">
<defs><clipPath id="below"><path d="M-10 470 L-10 439.7 L0.0 439.7 L2.6 440.3 L5.2 440.9 L7.8 443.0 L10.4 442.8 L13.0 444.7 L15.5 445.2 L18.0 445.2 L20.5 445.0 L23.0 446.4 L25.5 445.7 L28.0 447.0 L30.5 446.6 L33.0 448.0 L35.8 447.9 L38.7 449.5 L41.5 451.2 L44.3 450.5 L47.2 451.6 L50.0 453.0 L52.8 452.4 L55.7 452.3 L58.5 450.7 L61.3 449.4 L64.2 449.9 L67.0 448.0 L69.5 446.1 L72.0 447.0 L74.5 444.9 L77.0 443.7 L79.5 442.8 L82.0 442.3 L84.5 442.6 L87.0 441.0 L89.5 439.0 L92.0 438.7 L94.5 437.6 L97.0 436.0 L99.6 434.7 L102.2 434.1 L104.8 432.0 L107.4 431.0 L110.0 431.0 L112.5 430.4 L115.0 431.4 L117.5 430.8 L120.0 431.0 L123.0 440.0 L125.5 440.8 L128.0 442.5 L130.5 443.4 L133.0 444.7 L136.5 440.9 L140.0 438.0 L142.8 438.3 L145.7 437.8 L148.5 436.4 L151.3 436.8 L154.2 436.4 L157.0 436.0 L159.5 437.0 L162.0 436.8 L164.5 436.0 L167.0 437.7 L169.5 436.0 L172.0 436.8 L174.5 437.7 L177.0 436.6 L179.5 437.5 L182.0 436.7 L184.5 438.2 L187.0 438.0 L189.6 438.9 L192.2 438.8 L194.8 439.8 L197.4 439.0 L200.0 439.7 L202.6 438.8 L205.2 437.2 L207.8 435.9 L210.4 434.2 L213.0 433.0 L215.5 433.5 L218.0 433.5 L220.5 432.2 L223.0 432.4 L225.5 430.8 L228.0 431.9 L230.5 431.6 L233.0 431.0 L235.5 432.2 L238.0 432.0 L240.5 430.9 L243.0 431.2 L245.5 432.0 L248.0 430.7 L250.5 431.8 L253.0 432.0 L256.0 431.0 L259.0 430.7 L262.0 430.3 L265.0 431.0 L267.5 431.7 L270.0 430.4 L272.5 430.8 L275.0 431.5 L278.5 433.0 L282.0 435.0 L284.7 437.2 L287.3 436.7 L290.0 439.0 L292.5 440.6 L295.0 442.6 L297.5 445.1 L300.0 446.0 L302.6 446.1 L305.2 445.6 L307.8 443.7 L310.4 443.4 L313.0 443.0 L316.5 441.0 L320.0 439.7 L322.6 440.5 L325.2 440.7 L327.8 438.9 L330.4 439.0 L333.0 439.7 L335.7 439.2 L338.4 439.3 L341.1 440.0 L343.8 440.3 L346.5 439.7 L349.2 439.2 L351.9 440.2 L354.6 440.2 L357.3 440.7 L360.0 440.7 L362.5 441.7 L365.0 441.1 L367.5 440.8 L370.0 441.0 L372.5 441.2 L375.0 439.8 L377.5 441.7 L380.0 441.4 L382.5 441.6 L385.0 441.5 L387.5 440.6 L390.0 440.6 L392.5 440.0 L395.0 441.2 L397.5 439.9 L400.0 439.9 L402.5 440.3 L405.0 440.2 L407.5 440.6 L410.0 440.0 L412.5 439.9 L415.0 440.2 L417.5 440.1 L420.0 441.0 L422.8 440.2 L425.7 439.0 L428.5 440.3 L431.3 439.3 L434.2 437.7 L437.0 438.0 L439.6 437.5 L442.1 437.7 L444.7 437.7 L447.2 437.2 L449.8 438.8 L452.3 439.1 L454.9 437.9 L457.4 438.0 L460.0 438.0 L462.8 437.5 L465.7 438.0 L468.5 439.0 L471.3 439.3 L474.2 441.0 L477.0 440.7 L479.7 440.0 L482.3 439.7 L485.0 441.7 L487.7 440.8 L490.3 439.9 L493.0 440.7 L495.5 440.7 L498.0 439.4 L500.5 440.4 L503.0 441.3 L505.5 440.9 L508.0 440.4 L510.5 439.3 L513.0 439.7 L515.5 441.5 L518.0 443.1 L520.5 446.5 L523.0 448.0 L526.5 443.1 L530.0 438.0 L532.5 438.5 L535.0 437.4 L537.5 437.0 L540.0 438.2 L542.5 438.4 L545.0 438.0 L547.5 437.8 L550.0 437.0 L552.8 439.2 L555.7 440.5 L558.5 440.9 L561.3 443.0 L564.2 444.2 L567.0 446.0 L569.6 445.4 L572.2 445.8 L574.8 446.7 L577.4 447.1 L580.0 448.0 L582.5 448.0 L585.0 448.2 L587.5 446.6 L590.0 447.3 L592.5 447.0 L595.0 446.5 L597.5 444.8 L600.0 444.7 L602.5 443.6 L605.0 443.2 L607.5 442.6 L610.0 442.2 L612.5 442.7 L615.0 442.8 L617.5 442.2 L620.0 441.0 L622.5 440.2 L625.0 439.8 L627.5 439.4 L630.0 438.0 L632.5 434.8 L635.0 433.7 L637.5 431.9 L640.0 428.7 L642.5 434.0 L645.0 438.0 L647.7 440.8 L650.3 442.4 L653.0 444.7 L655.5 440.6 L658.0 438.0 L661.5 439.5 L665.0 439.7 L667.7 441.8 L670.3 445.2 L673.0 447.0 L675.8 448.5 L678.7 447.7 L681.5 448.1 L684.3 449.8 L687.2 449.7 L690.0 449.7 L692.5 446.8 L695.0 444.5 L697.5 442.4 L700.0 441.0 L702.5 441.9 L705.0 441.7 L707.5 440.2 L710.0 441.7 L712.5 442.1 L715.0 441.3 L717.5 440.7 L720.0 441.0 L722.5 441.6 L725.0 441.1 L727.5 441.3 L730.0 443.9 L732.5 443.6 L735.0 443.8 L737.5 445.2 L740.0 444.7 L742.6 441.8 L745.2 440.0 L747.8 437.2 L750.4 433.1 L753.0 431.0 L756.5 431.5 L760.0 433.0 L762.5 435.0 L765.0 437.4 L767.5 440.7 L770.0 443.0 L772.5 439.5 L775.0 436.8 L777.5 433.2 L780.0 431.0 L782.5 433.7 L785.0 434.2 L787.5 436.2 L790.0 438.0 L792.5 438.6 L795.0 439.7 L797.5 439.1 L800.0 439.7 L802.6 442.3 L805.2 443.0 L807.8 444.8 L810.4 446.4 L813.0 448.0 L815.8 445.5 L818.6 445.1 L821.4 443.1 L824.2 441.3 L827.0 441.0 L829.5 441.7 L832.1 440.3 L834.6 440.9 L837.2 441.5 L839.7 441.1 L842.2 440.6 L844.8 441.0 L847.3 441.1 L849.8 441.6 L852.4 440.1 L854.9 441.1 L857.5 440.4 L860.0 441.0 L862.5 440.8 L865.0 442.1 L867.5 441.8 L870.0 442.1 L872.5 442.8 L875.0 443.4 L877.5 442.6 L880.0 443.0 L882.6 442.2 L885.2 441.0 L887.8 440.0 L890.4 439.4 L893.0 438.0 L896.0 435.1 L899.0 432.5 L902.0 429.7 L904.5 433.3 L907.0 437.0 L909.5 439.0 L912.0 439.4 L914.5 440.8 L917.0 441.0 L919.6 439.9 L922.2 436.4 L924.8 435.0 L927.4 433.7 L930.0 430.7 L932.5 432.0 L935.0 431.1 L937.5 431.6 L940.0 433.0 L942.6 434.9 L945.2 436.1 L947.8 438.4 L950.4 440.1 L953.0 443.0 L955.8 442.8 L958.7 442.5 L961.5 442.2 L964.3 440.0 L967.2 440.7 L970.0 439.7 L972.6 438.1 L975.2 434.9 L977.8 434.5 L980.4 432.7 L983.0 429.7 L985.5 429.4 L988.0 431.3 L990.5 430.5 L993.0 431.0 L995.5 433.5 L998.0 437.1 L1000.5 439.2 L1003.0 441.0 L1005.8 440.2 L1008.7 440.7 L1011.5 440.9 L1014.3 440.4 L1017.2 440.1 L1020.0 440.7 L1022.5 439.1 L1025.0 438.7 L1027.5 435.9 L1030.0 435.8 L1032.5 434.3 L1035.0 432.1 L1037.5 431.6 L1040.0 430.7 L1042.6 432.0 L1045.2 432.8 L1047.8 432.9 L1050.4 436.0 L1053.0 436.0 L1055.5 436.9 L1058.0 437.5 L1060.5 435.9 L1063.0 436.5 L1065.5 436.2 L1068.0 438.1 L1070.5 437.2 L1073.0 438.0 L1076.5 439.7 L1080.0 443.0 L1090 443.0 L1090 470 Z"/></clipPath><filter id="tb" x="-5%" y="-50%" width="110%" height="200%"><feGaussianBlur stdDeviation="1.300"/></filter></defs>
<path d="M-10 470 L-10 439.7 L0.0 439.7 L2.6 440.3 L5.2 440.9 L7.8 443.0 L10.4 442.8 L13.0 444.7 L15.5 445.2 L18.0 445.2 L20.5 445.0 L23.0 446.4 L25.5 445.7 L28.0 447.0 L30.5 446.6 L33.0 448.0 L35.8 447.9 L38.7 449.5 L41.5 451.2 L44.3 450.5 L47.2 451.6 L50.0 453.0 L52.8 452.4 L55.7 452.3 L58.5 450.7 L61.3 449.4 L64.2 449.9 L67.0 448.0 L69.5 446.1 L72.0 447.0 L74.5 444.9 L77.0 443.7 L79.5 442.8 L82.0 442.3 L84.5 442.6 L87.0 441.0 L89.5 439.0 L92.0 438.7 L94.5 437.6 L97.0 436.0 L99.6 434.7 L102.2 434.1 L104.8 432.0 L107.4 431.0 L110.0 431.0 L112.5 430.4 L115.0 431.4 L117.5 430.8 L120.0 431.0 L123.0 440.0 L125.5 440.8 L128.0 442.5 L130.5 443.4 L133.0 444.7 L136.5 440.9 L140.0 438.0 L142.8 438.3 L145.7 437.8 L148.5 436.4 L151.3 436.8 L154.2 436.4 L157.0 436.0 L159.5 437.0 L162.0 436.8 L164.5 436.0 L167.0 437.7 L169.5 436.0 L172.0 436.8 L174.5 437.7 L177.0 436.6 L179.5 437.5 L182.0 436.7 L184.5 438.2 L187.0 438.0 L189.6 438.9 L192.2 438.8 L194.8 439.8 L197.4 439.0 L200.0 439.7 L202.6 438.8 L205.2 437.2 L207.8 435.9 L210.4 434.2 L213.0 433.0 L215.5 433.5 L218.0 433.5 L220.5 432.2 L223.0 432.4 L225.5 430.8 L228.0 431.9 L230.5 431.6 L233.0 431.0 L235.5 432.2 L238.0 432.0 L240.5 430.9 L243.0 431.2 L245.5 432.0 L248.0 430.7 L250.5 431.8 L253.0 432.0 L256.0 431.0 L259.0 430.7 L262.0 430.3 L265.0 431.0 L267.5 431.7 L270.0 430.4 L272.5 430.8 L275.0 431.5 L278.5 433.0 L282.0 435.0 L284.7 437.2 L287.3 436.7 L290.0 439.0 L292.5 440.6 L295.0 442.6 L297.5 445.1 L300.0 446.0 L302.6 446.1 L305.2 445.6 L307.8 443.7 L310.4 443.4 L313.0 443.0 L316.5 441.0 L320.0 439.7 L322.6 440.5 L325.2 440.7 L327.8 438.9 L330.4 439.0 L333.0 439.7 L335.7 439.2 L338.4 439.3 L341.1 440.0 L343.8 440.3 L346.5 439.7 L349.2 439.2 L351.9 440.2 L354.6 440.2 L357.3 440.7 L360.0 440.7 L362.5 441.7 L365.0 441.1 L367.5 440.8 L370.0 441.0 L372.5 441.2 L375.0 439.8 L377.5 441.7 L380.0 441.4 L382.5 441.6 L385.0 441.5 L387.5 440.6 L390.0 440.6 L392.5 440.0 L395.0 441.2 L397.5 439.9 L400.0 439.9 L402.5 440.3 L405.0 440.2 L407.5 440.6 L410.0 440.0 L412.5 439.9 L415.0 440.2 L417.5 440.1 L420.0 441.0 L422.8 440.2 L425.7 439.0 L428.5 440.3 L431.3 439.3 L434.2 437.7 L437.0 438.0 L439.6 437.5 L442.1 437.7 L444.7 437.7 L447.2 437.2 L449.8 438.8 L452.3 439.1 L454.9 437.9 L457.4 438.0 L460.0 438.0 L462.8 437.5 L465.7 438.0 L468.5 439.0 L471.3 439.3 L474.2 441.0 L477.0 440.7 L479.7 440.0 L482.3 439.7 L485.0 441.7 L487.7 440.8 L490.3 439.9 L493.0 440.7 L495.5 440.7 L498.0 439.4 L500.5 440.4 L503.0 441.3 L505.5 440.9 L508.0 440.4 L510.5 439.3 L513.0 439.7 L515.5 441.5 L518.0 443.1 L520.5 446.5 L523.0 448.0 L526.5 443.1 L530.0 438.0 L532.5 438.5 L535.0 437.4 L537.5 437.0 L540.0 438.2 L542.5 438.4 L545.0 438.0 L547.5 437.8 L550.0 437.0 L552.8 439.2 L555.7 440.5 L558.5 440.9 L561.3 443.0 L564.2 444.2 L567.0 446.0 L569.6 445.4 L572.2 445.8 L574.8 446.7 L577.4 447.1 L580.0 448.0 L582.5 448.0 L585.0 448.2 L587.5 446.6 L590.0 447.3 L592.5 447.0 L595.0 446.5 L597.5 444.8 L600.0 444.7 L602.5 443.6 L605.0 443.2 L607.5 442.6 L610.0 442.2 L612.5 442.7 L615.0 442.8 L617.5 442.2 L620.0 441.0 L622.5 440.2 L625.0 439.8 L627.5 439.4 L630.0 438.0 L632.5 434.8 L635.0 433.7 L637.5 431.9 L640.0 428.7 L642.5 434.0 L645.0 438.0 L647.7 440.8 L650.3 442.4 L653.0 444.7 L655.5 440.6 L658.0 438.0 L661.5 439.5 L665.0 439.7 L667.7 441.8 L670.3 445.2 L673.0 447.0 L675.8 448.5 L678.7 447.7 L681.5 448.1 L684.3 449.8 L687.2 449.7 L690.0 449.7 L692.5 446.8 L695.0 444.5 L697.5 442.4 L700.0 441.0 L702.5 441.9 L705.0 441.7 L707.5 440.2 L710.0 441.7 L712.5 442.1 L715.0 441.3 L717.5 440.7 L720.0 441.0 L722.5 441.6 L725.0 441.1 L727.5 441.3 L730.0 443.9 L732.5 443.6 L735.0 443.8 L737.5 445.2 L740.0 444.7 L742.6 441.8 L745.2 440.0 L747.8 437.2 L750.4 433.1 L753.0 431.0 L756.5 431.5 L760.0 433.0 L762.5 435.0 L765.0 437.4 L767.5 440.7 L770.0 443.0 L772.5 439.5 L775.0 436.8 L777.5 433.2 L780.0 431.0 L782.5 433.7 L785.0 434.2 L787.5 436.2 L790.0 438.0 L792.5 438.6 L795.0 439.7 L797.5 439.1 L800.0 439.7 L802.6 442.3 L805.2 443.0 L807.8 444.8 L810.4 446.4 L813.0 448.0 L815.8 445.5 L818.6 445.1 L821.4 443.1 L824.2 441.3 L827.0 441.0 L829.5 441.7 L832.1 440.3 L834.6 440.9 L837.2 441.5 L839.7 441.1 L842.2 440.6 L844.8 441.0 L847.3 441.1 L849.8 441.6 L852.4 440.1 L854.9 441.1 L857.5 440.4 L860.0 441.0 L862.5 440.8 L865.0 442.1 L867.5 441.8 L870.0 442.1 L872.5 442.8 L875.0 443.4 L877.5 442.6 L880.0 443.0 L882.6 442.2 L885.2 441.0 L887.8 440.0 L890.4 439.4 L893.0 438.0 L896.0 435.1 L899.0 432.5 L902.0 429.7 L904.5 433.3 L907.0 437.0 L909.5 439.0 L912.0 439.4 L914.5 440.8 L917.0 441.0 L919.6 439.9 L922.2 436.4 L924.8 435.0 L927.4 433.7 L930.0 430.7 L932.5 432.0 L935.0 431.1 L937.5 431.6 L940.0 433.0 L942.6 434.9 L945.2 436.1 L947.8 438.4 L950.4 440.1 L953.0 443.0 L955.8 442.8 L958.7 442.5 L961.5 442.2 L964.3 440.0 L967.2 440.7 L970.0 439.7 L972.6 438.1 L975.2 434.9 L977.8 434.5 L980.4 432.7 L983.0 429.7 L985.5 429.4 L988.0 431.3 L990.5 430.5 L993.0 431.0 L995.5 433.5 L998.0 437.1 L1000.5 439.2 L1003.0 441.0 L1005.8 440.2 L1008.7 440.7 L1011.5 440.9 L1014.3 440.4 L1017.2 440.1 L1020.0 440.7 L1022.5 439.1 L1025.0 438.7 L1027.5 435.9 L1030.0 435.8 L1032.5 434.3 L1035.0 432.1 L1037.5 431.6 L1040.0 430.7 L1042.6 432.0 L1045.2 432.8 L1047.8 432.9 L1050.4 436.0 L1053.0 436.0 L1055.5 436.9 L1058.0 437.5 L1060.5 435.9 L1063.0 436.5 L1065.5 436.2 L1068.0 438.1 L1070.5 437.2 L1073.0 438.0 L1076.5 439.7 L1080.0 443.0 L1090 443.0 L1090 470 Z" fill="#fff"/>
<g clip-path="url(#below)"><path d="M-10 380 L-10 439.7 L0.0 439.7 L2.6 440.3 L5.2 440.9 L7.8 443.0 L10.4 442.8 L13.0 444.7 L15.5 445.2 L18.0 445.2 L20.5 445.0 L23.0 446.4 L25.5 445.7 L28.0 447.0 L30.5 446.6 L33.0 448.0 L35.8 447.9 L38.7 449.5 L41.5 451.2 L44.3 450.5 L47.2 451.6 L50.0 453.0 L52.8 452.4 L55.7 452.3 L58.5 450.7 L61.3 449.4 L64.2 449.9 L67.0 448.0 L69.5 446.1 L72.0 447.0 L74.5 444.9 L77.0 443.7 L79.5 442.8 L82.0 442.3 L84.5 442.6 L87.0 441.0 L89.5 439.0 L92.0 438.7 L94.5 437.6 L97.0 436.0 L99.6 434.7 L102.2 434.1 L104.8 432.0 L107.4 431.0 L110.0 431.0 L112.5 430.4 L115.0 431.4 L117.5 430.8 L120.0 431.0 L123.0 440.0 L125.5 440.8 L128.0 442.5 L130.5 443.4 L133.0 444.7 L136.5 440.9 L140.0 438.0 L142.8 438.3 L145.7 437.8 L148.5 436.4 L151.3 436.8 L154.2 436.4 L157.0 436.0 L159.5 437.0 L162.0 436.8 L164.5 436.0 L167.0 437.7 L169.5 436.0 L172.0 436.8 L174.5 437.7 L177.0 436.6 L179.5 437.5 L182.0 436.7 L184.5 438.2 L187.0 438.0 L189.6 438.9 L192.2 438.8 L194.8 439.8 L197.4 439.0 L200.0 439.7 L202.6 438.8 L205.2 437.2 L207.8 435.9 L210.4 434.2 L213.0 433.0 L215.5 433.5 L218.0 433.5 L220.5 432.2 L223.0 432.4 L225.5 430.8 L228.0 431.9 L230.5 431.6 L233.0 431.0 L235.5 432.2 L238.0 432.0 L240.5 430.9 L243.0 431.2 L245.5 432.0 L248.0 430.7 L250.5 431.8 L253.0 432.0 L256.0 431.0 L259.0 430.7 L262.0 430.3 L265.0 431.0 L267.5 431.7 L270.0 430.4 L272.5 430.8 L275.0 431.5 L278.5 433.0 L282.0 435.0 L284.7 437.2 L287.3 436.7 L290.0 439.0 L292.5 440.6 L295.0 442.6 L297.5 445.1 L300.0 446.0 L302.6 446.1 L305.2 445.6 L307.8 443.7 L310.4 443.4 L313.0 443.0 L316.5 441.0 L320.0 439.7 L322.6 440.5 L325.2 440.7 L327.8 438.9 L330.4 439.0 L333.0 439.7 L335.7 439.2 L338.4 439.3 L341.1 440.0 L343.8 440.3 L346.5 439.7 L349.2 439.2 L351.9 440.2 L354.6 440.2 L357.3 440.7 L360.0 440.7 L362.5 441.7 L365.0 441.1 L367.5 440.8 L370.0 441.0 L372.5 441.2 L375.0 439.8 L377.5 441.7 L380.0 441.4 L382.5 441.6 L385.0 441.5 L387.5 440.6 L390.0 440.6 L392.5 440.0 L395.0 441.2 L397.5 439.9 L400.0 439.9 L402.5 440.3 L405.0 440.2 L407.5 440.6 L410.0 440.0 L412.5 439.9 L415.0 440.2 L417.5 440.1 L420.0 441.0 L422.8 440.2 L425.7 439.0 L428.5 440.3 L431.3 439.3 L434.2 437.7 L437.0 438.0 L439.6 437.5 L442.1 437.7 L444.7 437.7 L447.2 437.2 L449.8 438.8 L452.3 439.1 L454.9 437.9 L457.4 438.0 L460.0 438.0 L462.8 437.5 L465.7 438.0 L468.5 439.0 L471.3 439.3 L474.2 441.0 L477.0 440.7 L479.7 440.0 L482.3 439.7 L485.0 441.7 L487.7 440.8 L490.3 439.9 L493.0 440.7 L495.5 440.7 L498.0 439.4 L500.5 440.4 L503.0 441.3 L505.5 440.9 L508.0 440.4 L510.5 439.3 L513.0 439.7 L515.5 441.5 L518.0 443.1 L520.5 446.5 L523.0 448.0 L526.5 443.1 L530.0 438.0 L532.5 438.5 L535.0 437.4 L537.5 437.0 L540.0 438.2 L542.5 438.4 L545.0 438.0 L547.5 437.8 L550.0 437.0 L552.8 439.2 L555.7 440.5 L558.5 440.9 L561.3 443.0 L564.2 444.2 L567.0 446.0 L569.6 445.4 L572.2 445.8 L574.8 446.7 L577.4 447.1 L580.0 448.0 L582.5 448.0 L585.0 448.2 L587.5 446.6 L590.0 447.3 L592.5 447.0 L595.0 446.5 L597.5 444.8 L600.0 444.7 L602.5 443.6 L605.0 443.2 L607.5 442.6 L610.0 442.2 L612.5 442.7 L615.0 442.8 L617.5 442.2 L620.0 441.0 L622.5 440.2 L625.0 439.8 L627.5 439.4 L630.0 438.0 L632.5 434.8 L635.0 433.7 L637.5 431.9 L640.0 428.7 L642.5 434.0 L645.0 438.0 L647.7 440.8 L650.3 442.4 L653.0 444.7 L655.5 440.6 L658.0 438.0 L661.5 439.5 L665.0 439.7 L667.7 441.8 L670.3 445.2 L673.0 447.0 L675.8 448.5 L678.7 447.7 L681.5 448.1 L684.3 449.8 L687.2 449.7 L690.0 449.7 L692.5 446.8 L695.0 444.5 L697.5 442.4 L700.0 441.0 L702.5 441.9 L705.0 441.7 L707.5 440.2 L710.0 441.7 L712.5 442.1 L715.0 441.3 L717.5 440.7 L720.0 441.0 L722.5 441.6 L725.0 441.1 L727.5 441.3 L730.0 443.9 L732.5 443.6 L735.0 443.8 L737.5 445.2 L740.0 444.7 L742.6 441.8 L745.2 440.0 L747.8 437.2 L750.4 433.1 L753.0 431.0 L756.5 431.5 L760.0 433.0 L762.5 435.0 L765.0 437.4 L767.5 440.7 L770.0 443.0 L772.5 439.5 L775.0 436.8 L777.5 433.2 L780.0 431.0 L782.5 433.7 L785.0 434.2 L787.5 436.2 L790.0 438.0 L792.5 438.6 L795.0 439.7 L797.5 439.1 L800.0 439.7 L802.6 442.3 L805.2 443.0 L807.8 444.8 L810.4 446.4 L813.0 448.0 L815.8 445.5 L818.6 445.1 L821.4 443.1 L824.2 441.3 L827.0 441.0 L829.5 441.7 L832.1 440.3 L834.6 440.9 L837.2 441.5 L839.7 441.1 L842.2 440.6 L844.8 441.0 L847.3 441.1 L849.8 441.6 L852.4 440.1 L854.9 441.1 L857.5 440.4 L860.0 441.0 L862.5 440.8 L865.0 442.1 L867.5 441.8 L870.0 442.1 L872.5 442.8 L875.0 443.4 L877.5 442.6 L880.0 443.0 L882.6 442.2 L885.2 441.0 L887.8 440.0 L890.4 439.4 L893.0 438.0 L896.0 435.1 L899.0 432.5 L902.0 429.7 L904.5 433.3 L907.0 437.0 L909.5 439.0 L912.0 439.4 L914.5 440.8 L917.0 441.0 L919.6 439.9 L922.2 436.4 L924.8 435.0 L927.4 433.7 L930.0 430.7 L932.5 432.0 L935.0 431.1 L937.5 431.6 L940.0 433.0 L942.6 434.9 L945.2 436.1 L947.8 438.4 L950.4 440.1 L953.0 443.0 L955.8 442.8 L958.7 442.5 L961.5 442.2 L964.3 440.0 L967.2 440.7 L970.0 439.7 L972.6 438.1 L975.2 434.9 L977.8 434.5 L980.4 432.7 L983.0 429.7 L985.5 429.4 L988.0 431.3 L990.5 430.5 L993.0 431.0 L995.5 433.5 L998.0 437.1 L1000.5 439.2 L1003.0 441.0 L1005.8 440.2 L1008.7 440.7 L1011.5 440.9 L1014.3 440.4 L1017.2 440.1 L1020.0 440.7 L1022.5 439.1 L1025.0 438.7 L1027.5 435.9 L1030.0 435.8 L1032.5 434.3 L1035.0 432.1 L1037.5 431.6 L1040.0 430.7 L1042.6 432.0 L1045.2 432.8 L1047.8 432.9 L1050.4 436.0 L1053.0 436.0 L1055.5 436.9 L1058.0 437.5 L1060.5 435.9 L1063.0 436.5 L1065.5 436.2 L1068.0 438.1 L1070.5 437.2 L1073.0 438.0 L1076.5 439.7 L1080.0 443.0 L1090 443.0 L1090 380 Z" transform="translate(6,5)" fill="#5a5a5a" opacity="0.680" filter="url(#tb)"/></g>
</svg>
<div class="lb"></div><div class="rb"></div>
</body>
</html>
